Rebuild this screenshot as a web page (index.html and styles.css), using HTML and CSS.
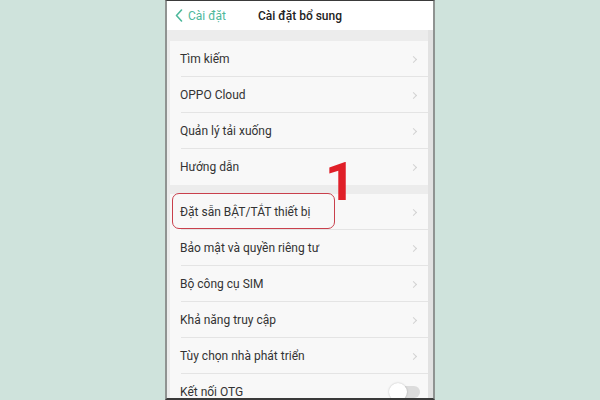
FILE: index.html
```html
<!DOCTYPE html>
<html lang="vi">
<head>
<meta charset="utf-8">
<link rel="stylesheet" href="styles.css">
</head>
<body>
<div class="stage">
  <div class="phone">
    <div class="header">
      <div class="back">
        <svg class="back-icon" width="8" height="13" viewBox="0 0 8 13"><path d="M6.5 1 L1.5 6.5 L6.5 12" fill="none" stroke="#4db89b" stroke-width="1.6" stroke-linecap="round" stroke-linejoin="round"/></svg>
        <span>Cài đặt</span>
      </div>
      <div class="title">Cài đặt bổ sung</div>
    </div>
    <div class="content">
      <div class="card">
        <div class="row"><span>Tìm kiếm</span><i class="chev"></i></div>
        <div class="row"><span>OPPO Cloud</span><i class="chev"></i></div>
        <div class="row"><span>Quản lý tải xuống</span><i class="chev"></i></div>
        <div class="row last"><span>Hướng dẫn</span><i class="chev"></i></div>
      </div>
      <div class="card">
        <div class="row"><span>Đặt sẵn BẬT/TẮT thiết bị</span><i class="chev"></i></div>
        <div class="row"><span>Bảo mật và quyền riêng tư</span><i class="chev"></i></div>
        <div class="row"><span>Bộ công cụ SIM</span><i class="chev"></i></div>
        <div class="row"><span>Khả năng truy cập</span><i class="chev"></i></div>
        <div class="row"><span>Tùy chọn nhà phát triển</span><i class="chev"></i></div>
        <div class="row last"><span>Kết nối OTG</span><span class="toggle"><span class="knob"></span></span></div>
      </div>
    </div>
    <div class="mark-box"></div>
    <div class="mark-num">1</div>
  </div>
</div>
</body>
</html>
```
FILE: styles.css
```css
* { box-sizing: border-box; }
html, body { margin: 0; padding: 0; }
body {
  width: 600px;
  height: 400px;
  background: #cfe3dc;
  font-family: Roboto, "Noto Sans", "Liberation Sans", sans-serif;
  overflow: hidden;
}
.stage {
  width: 600px;
  height: 400px;
  display: flex;
  justify-content: center;
}
.phone {
  position: relative;
  width: 270px;
  height: 400px;
  border-left: 2px solid #8f9391;
  border-right: 2px solid #8f9391;
  border-top: 1px solid #3a3a3a;
  border-bottom: 2px solid #3a3a3a;
  background: #ececec;
  overflow: hidden;
  display: flex;
  flex-direction: column;
}
.header {
  height: 29px;
  background: #ffffff;
  display: flex;
  align-items: center;
  position: relative;
  flex: none;
}
.back {
  display: flex;
  align-items: center;
  gap: 5px;
  padding-left: 8px;
  color: #4db89b;
  font-size: 12px;
}
.title {
  position: absolute;
  left: 0;
  right: 0;
  text-align: center;
  font-size: 12px;
  font-weight: 500;
  color: #222;
  pointer-events: none;
}
.content {
  padding: 11px 4px 0 3px;
  display: flex;
  flex-direction: column;
  gap: 9px;
  background: linear-gradient(to right, #ececec 0, #ececec 261px, #e2e2e2 261px);
}
.card {
  background: #f8f8f8;
  margin-right: 1px;
}
.row {
  height: 36px;
  display: flex;
  align-items: center;
  justify-content: space-between;
  padding-left: 10px;
  padding-right: 9px;
  font-size: 12px;
  color: #333;
  position: relative;
}
.row::after {
  content: "";
  position: absolute;
  left: 11px;
  right: 0;
  bottom: 0;
  height: 1px;
  background: #e4e4e4;
}
.row.last::after { display: none; }
.chev {
  width: 5px;
  height: 5px;
  border-top: 1px solid #d2d2d2;
  border-right: 1px solid #d2d2d2;
  transform: rotate(45deg);
  margin-right: 3px;
}
.toggle {
  position: relative;
  width: 28px;
  height: 12px;
  border-radius: 6px;
  background: #dcdcdc;
  margin-right: -1px;
}
.knob {
  position: absolute;
  left: -3px;
  top: -3px;
  width: 18px;
  height: 18px;
  border-radius: 50%;
  background: #fff;
  box-shadow: 0 0 2px rgba(0,0,0,0.25);
}
.mark-box {
  position: absolute;
  left: 5px;
  top: 192px;
  width: 163px;
  height: 36px;
  border: 1.5px solid #c9404c;
  border-radius: 7px;
}
.mark-num {
  position: absolute;
  left: 158px;
  top: 151px;
  font-family: Roboto, "Liberation Sans", sans-serif;
  font-size: 53px;
  line-height: 60px;
  color: #e01f28;
  font-weight: 700;
}
```
